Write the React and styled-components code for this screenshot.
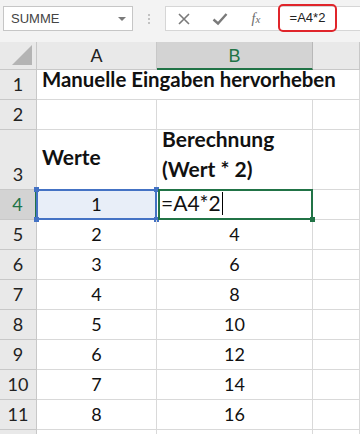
import styled, { createGlobalStyle } from 'styled-components';

const GlobalStyle = createGlobalStyle`
  html, body {
    margin: 0;
    padding: 0;
    background: #ffffff;
  }
  body {
    width: 360px;
    height: 434px;
    overflow: hidden;
    font-family: 'Lato', 'Liberation Sans', sans-serif;
  }
`;

const rows = [
  { n: 1, h: 30, a: 'Manuelle Eingaben hervorheben', title: true },
  { n: 2, h: 30 },
  { n: 3, h: 60, a: 'Werte', b: ['Berechnung', '(Wert * 2)'], head: true },
  { n: 4, h: 30, a: '1', b: '=A4*2', active: true },
  { n: 5, h: 30, a: '2', b: '4' },
  { n: 6, h: 30, a: '3', b: '6' },
  { n: 7, h: 30, a: '4', b: '8' },
  { n: 8, h: 30, a: '5', b: '10' },
  { n: 9, h: 30, a: '6', b: '12' },
  { n: 10, h: 30, a: '7', b: '14' },
  { n: 11, h: 30, a: '8', b: '16' },
  { n: '', h: 30 },
];

const Page = styled.div`
  width: 360px;
  height: 434px;
  overflow: hidden;
  background: #ffffff;
`;

const Toolbar = styled.div`
  height: 42px;
  background: #f3f3f3;
  display: flex;
  align-items: flex-start;
  padding-top: 6px;
  box-sizing: border-box;
`;

const NameBox = styled.div`
  margin-left: 3px;
  width: 130px;
  height: 25px;
  box-sizing: border-box;
  background: #fff;
  border: 1px solid #c6c6c6;
  display: flex;
  align-items: center;
  justify-content: space-between;
  padding: 0 6px 0 7px;
  font-family: 'Liberation Sans', Arial, sans-serif;
  font-size: 13px;
  color: #444;
`;

const Arrow = styled.span`
  width: 0;
  height: 0;
  border-left: 4px solid transparent;
  border-right: 4px solid transparent;
  border-top: 4px solid #7a7a7a;
`;

const Dots = styled.div`
  width: 32px;
  height: 25px;
  display: flex;
  flex-direction: column;
  align-items: center;
  justify-content: center;
  gap: 2px;
  & > span {
    width: 2px;
    height: 2px;
    background: #c2c2c2;
  }
`;

const FormulaBar = styled.div`
  flex: 1;
  height: 25px;
  box-sizing: border-box;
  background: #fff;
  border: 1px solid #d6d6d6;
  border-right: none;
  display: flex;
  align-items: center;
`;

const IconSlot = styled.div`
  width: 36px;
  height: 100%;
  display: flex;
  align-items: center;
  justify-content: center;
`;

const Fx = styled.span`
  font-family: 'Liberation Serif', 'Times New Roman', serif;
  font-style: italic;
  font-size: 14px;
  color: #6a6a6a;
  & > sub {
    font-size: 11px;
    vertical-align: baseline;
  }
`;

const FormulaText = styled.div`
  margin-left: 4px;
  margin-top: -2px;
  width: 59px;
  height: 28px;
  box-sizing: border-box;
  border: 2px solid #e0252b;
  border-radius: 5px;
  display: flex;
  align-items: center;
  justify-content: center;
  font-family: 'Liberation Sans', Arial, sans-serif;
  font-size: 13px;
  color: #222;
`;

const Sheet = styled.div`
  display: grid;
  grid-template-columns: 37px 120px 156px 1fr;
`;

const Corner = styled.div`
  height: 28px;
  box-sizing: border-box;
  background: #e9e9e9;
  border-right: 1px solid #c8c8c8;
  border-bottom: 1px solid #c8c8c8;
  position: relative;
  &::after {
    content: '';
    position: absolute;
    right: 4px;
    bottom: 4px;
    width: 0;
    height: 0;
    border-left: 20px solid transparent;
    border-bottom: 20px solid #b4b4b4;
  }
`;

const ColHead = styled.div`
  height: 28px;
  box-sizing: border-box;
  background: ${(p) => (p.$sel ? '#d3d3d3' : '#e9e9e9')};
  border-right: 1px solid ${(p) => (p.$sel ? '#b8b8b8' : '#c8c8c8')};
  border-bottom: ${(p) => (p.$sel ? '2px solid #217346' : '1px solid #c8c8c8')};
  color: ${(p) => (p.$sel ? '#217346' : '#222')};
  font-family: 'Liberation Sans', Arial, sans-serif;
  font-size: 18px;
  display: flex;
  align-items: center;
  justify-content: center;
  padding-top: 2px;
`;

const RowHead = styled.div`
  height: ${(p) => p.$h}px;
  box-sizing: border-box;
  background: ${(p) => (p.$sel ? '#d3d3d3' : '#e9e9e9')};
  border-right: ${(p) => (p.$sel ? '2px solid #217346' : '1px solid #c8c8c8')};
  border-bottom: 1px solid #c8c8c8;
  color: ${(p) => (p.$sel ? '#217346' : '#222')};
  font-size: 18px;
  line-height: 22px;
  display: flex;
  align-items: flex-end;
  justify-content: center;
  padding-bottom: 4px;
`;

const Cell = styled.div`
  height: ${(p) => p.$h}px;
  box-sizing: border-box;
  border-right: ${(p) => (p.$open ? 'none' : '1px solid #d9d9d9')};
  border-bottom: 1px solid #d9d9d9;
  display: flex;
  flex-direction: column;
  align-items: ${(p) => (p.$center ? 'center' : 'flex-start')};
  justify-content: ${(p) => p.$v || 'flex-end'};
  padding: 0 5px ${(p) => (p.$bold ? 5 : 4)}px;
  font-size: ${(p) => (p.$bold ? 21 : 18)}px;
  line-height: ${(p) => (p.$bold ? 30 : 22)}px;
  color: #111;
  font-weight: ${(p) => (p.$bold ? 700 : 400)};
  white-space: nowrap;
  position: relative;
  overflow: visible;
  z-index: ${(p) => (p.$open ? 1 : 'auto')};
`;

const TitleCell = styled(Cell)`
  font-size: 20.4px;
`;

const RefCell = styled(Cell)`
  background: #e8eef8;
  border: 2px solid #4472c4;
  margin-left: -1px;
  margin-top: -1px;
  height: 31px;
  padding-bottom: 3px;
`;

const Handle = styled.span`
  position: absolute;
  width: 5px;
  height: 5px;
  background: ${(p) => p.$c};
  ${(p) => (p.$top ? 'top: -4px;' : 'bottom: -4px;')}
  ${(p) => (p.$left ? 'left: -4px;' : 'right: -4px;')}
`;

const EditCell = styled(Cell)`
  border: 2px solid #217346;
  margin-top: -1px;
  margin-left: 1px;
  height: 31px;
  padding: 0 0 2px 1px;
  font-size: 21px;
  line-height: 26px;
  z-index: 2;
`;

const Caret = styled.span`
  display: inline-block;
  width: 1px;
  height: 23px;
  background: #000;
  margin-left: 1px;
  vertical-align: -4px;
`;

function XIcon() {
  return (
    <svg width='14' height='14' viewBox='0 0 14 14'>
      <path d='M2 2 L12 12 M12 2 L2 12' stroke='#7a7a7a' strokeWidth='1.6' fill='none' />
    </svg>
  );
}

function CheckIcon() {
  return (
    <svg width='16' height='14' viewBox='0 0 16 14'>
      <path d='M1.5 7.5 L6 11.5 L14.5 2' stroke='#7a7a7a' strokeWidth='2.4' fill='none' />
    </svg>
  );
}

export default function App() {
  return (
    <Page>
      <GlobalStyle />
      <Toolbar>
        <NameBox>
          SUMME
          <Arrow />
        </NameBox>
        <Dots>
          <span />
          <span />
          <span />
        </Dots>
        <FormulaBar>
          <IconSlot>
            <XIcon />
          </IconSlot>
          <IconSlot>
            <CheckIcon />
          </IconSlot>
          <IconSlot>
            <Fx>
              f<sub>x</sub>
            </Fx>
          </IconSlot>
          <FormulaText>=A4*2</FormulaText>
        </FormulaBar>
      </Toolbar>
      <Sheet>
        <Corner />
        <ColHead>A</ColHead>
        <ColHead $sel>B</ColHead>
        <ColHead />
        {rows.map((r, i) => {
          const key = `r${i}`;
          const cells = [
            <RowHead key={`${key}h`} $h={r.h} $sel={r.active}>
              {r.n}
            </RowHead>,
          ];
          if (r.active) {
            cells.push(
              <RefCell key={`${key}a`} $h={r.h} $center>
                {r.a}
                <Handle $c='#4472c4' $top $left />
                <Handle $c='#4472c4' $top />
                <Handle $c='#4472c4' $left />
                <Handle $c='#4472c4' />
              </RefCell>,
              <EditCell key={`${key}b`} $h={r.h}>
                <span>
                  {r.b}
                  <Caret />
                </span>
                <Handle $c='#217346' />
              </EditCell>
            );
          } else if (r.title) {
            cells.push(
              <TitleCell key={`${key}a`} $h={r.h} $bold $open>
                <span>{r.a}</span>
              </TitleCell>,
              <Cell key={`${key}b`} $h={r.h} $open />
            );
          } else if (r.head) {
            cells.push(
              <Cell key={`${key}a`} $h={r.h} $bold $v='center'>
                {r.a}
              </Cell>,
              <Cell key={`${key}b`} $h={r.h} $bold>
                {r.b.map((t) => (
                  <span key={t}>{t}</span>
                ))}
              </Cell>
            );
          } else {
            cells.push(
              <Cell key={`${key}a`} $h={r.h} $center>
                {r.a}
              </Cell>,
              <Cell key={`${key}b`} $h={r.h} $center>
                {r.b}
              </Cell>
            );
          }
          cells.push(<Cell key={`${key}c`} $h={r.h} />);
          return cells;
        })}
      </Sheet>
    </Page>
  );
}
